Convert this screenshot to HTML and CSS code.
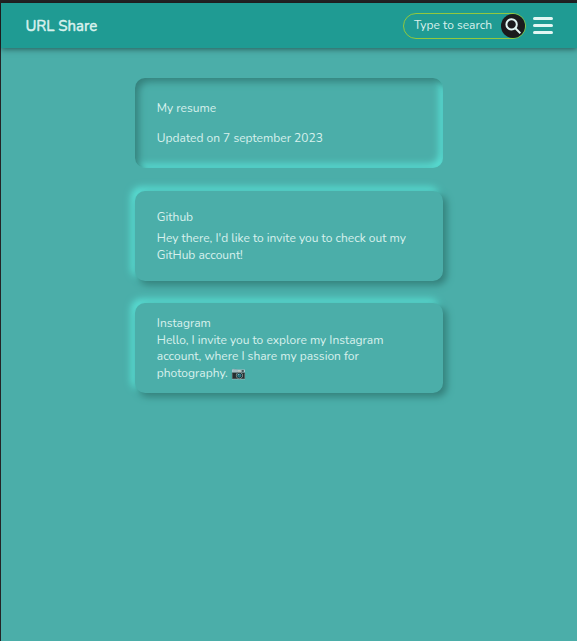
FILE: index.html
```html
<!DOCTYPE html>
<html lang="en">
<head>
<meta charset="utf-8">
<title>URL Share</title>
<link rel="stylesheet" href="styles.css">
</head>
<body>
<header class="navbar">
  <h1 class="brand">URL Share</h1>
  <div class="search">
    <span class="placeholder">Type to search</span>
    <button class="search-button" aria-label="Search">
      <svg width="16" height="16" viewBox="0 0 16 16" fill="none" stroke="currentColor" stroke-width="2"><circle cx="6.6" cy="6.4" r="5.2"/><path d="M10.4 10.2 15.4 15.2"/></svg>
    </button>
  </div>
  <button class="menu" aria-label="Menu"><i></i><i></i><i></i></button>
</header>
<main class="links">
  <a class="card pressed">
    <span class="title">My resume</span>
    <span class="text">Updated on 7 september 2023</span>
  </a>
  <a class="card medium">
    <span class="title">Github</span>
    <span class="text">Hey there, I'd like to invite you to check out my<br>GitHub account!</span>
  </a>
  <a class="card full">
    <span class="title">Instagram</span>
    <span class="text">Hello, I invite you to explore my Instagram<br>account, where I share my passion for<br>photography. <span class="emoji">📷</span></span>
  </a>
</main>
</body>
</html>
```
FILE: styles.css
```css
* { box-sizing: border-box; }
html { height: 100%; background: #242426; }
body {
  margin: 0;
  height: 641px;
  padding: 3px 0 0 1px;
  display: flex;
  flex-direction: column;
  overflow: hidden;
  color: #d8f1ed;
  font: 12px/16.5px Nunito, Lato, "Open Sans", sans-serif;
}
button { border: 0; padding: 0; color: #e2f6f3; }
.navbar {
  position: relative;
  flex: none;
  height: 45px;
  display: flex;
  align-items: center;
  padding: 0 24px;
  background: #1f9b93;
  box-shadow: 0 1px 6px rgba(0, 0, 0, .5);
}
.brand {
  margin: 0 auto 0 .4px;
  font-size: 15px;
  line-height: 22px;
  font-weight: 400;
  -webkit-text-stroke: .5px currentColor;
}
.search {
  width: 123px;
  height: 26px;
  display: flex;
  align-items: center;
  justify-content: space-between;
  padding-left: 10px;
  border: 1px solid #91c83e;
  border-radius: 13px;
}
.placeholder { white-space: nowrap; }
.search-button {
  width: 24px;
  height: 24px;
  display: grid;
  place-items: center;
  border-radius: 50%;
  background: #1b1b1d;
}
.menu {
  width: 20px;
  height: 17px;
  margin-left: 7px;
  display: flex;
  flex-direction: column;
  justify-content: space-between;
  background: none;
}
.menu i { width: 100%; height: 3px; border-radius: 2px; background: #e2f6f3; }
.links {
  flex: 1;
  display: flex;
  flex-direction: column;
  align-items: center;
  gap: 22.5px;
  padding-top: 30px;
  background: #4baea9;
}
.card {
  width: 308.4px;
  height: 90px;
  display: flex;
  flex-direction: column;
  justify-content: space-around;
  padding: 15px 22px;
  border-radius: 10px;
  background: #4baea9;
  box-shadow: 3.75px 3.75px 7.5px #35817c, -3.75px -3.75px 7.5px #5ae0d6;
}
.pressed { box-shadow: inset 3.75px 3.75px 7.5px #35817c, inset -3.75px -3.75px 7.5px #5ae0d6; }
.medium { padding-top: 16.2px; padding-bottom: 15px; }
.full { padding-top: 12px; padding-bottom: 12px; }
.title, .text { white-space: nowrap; }
.emoji { font-size: 12px; line-height: 1; opacity: .9; }
```
